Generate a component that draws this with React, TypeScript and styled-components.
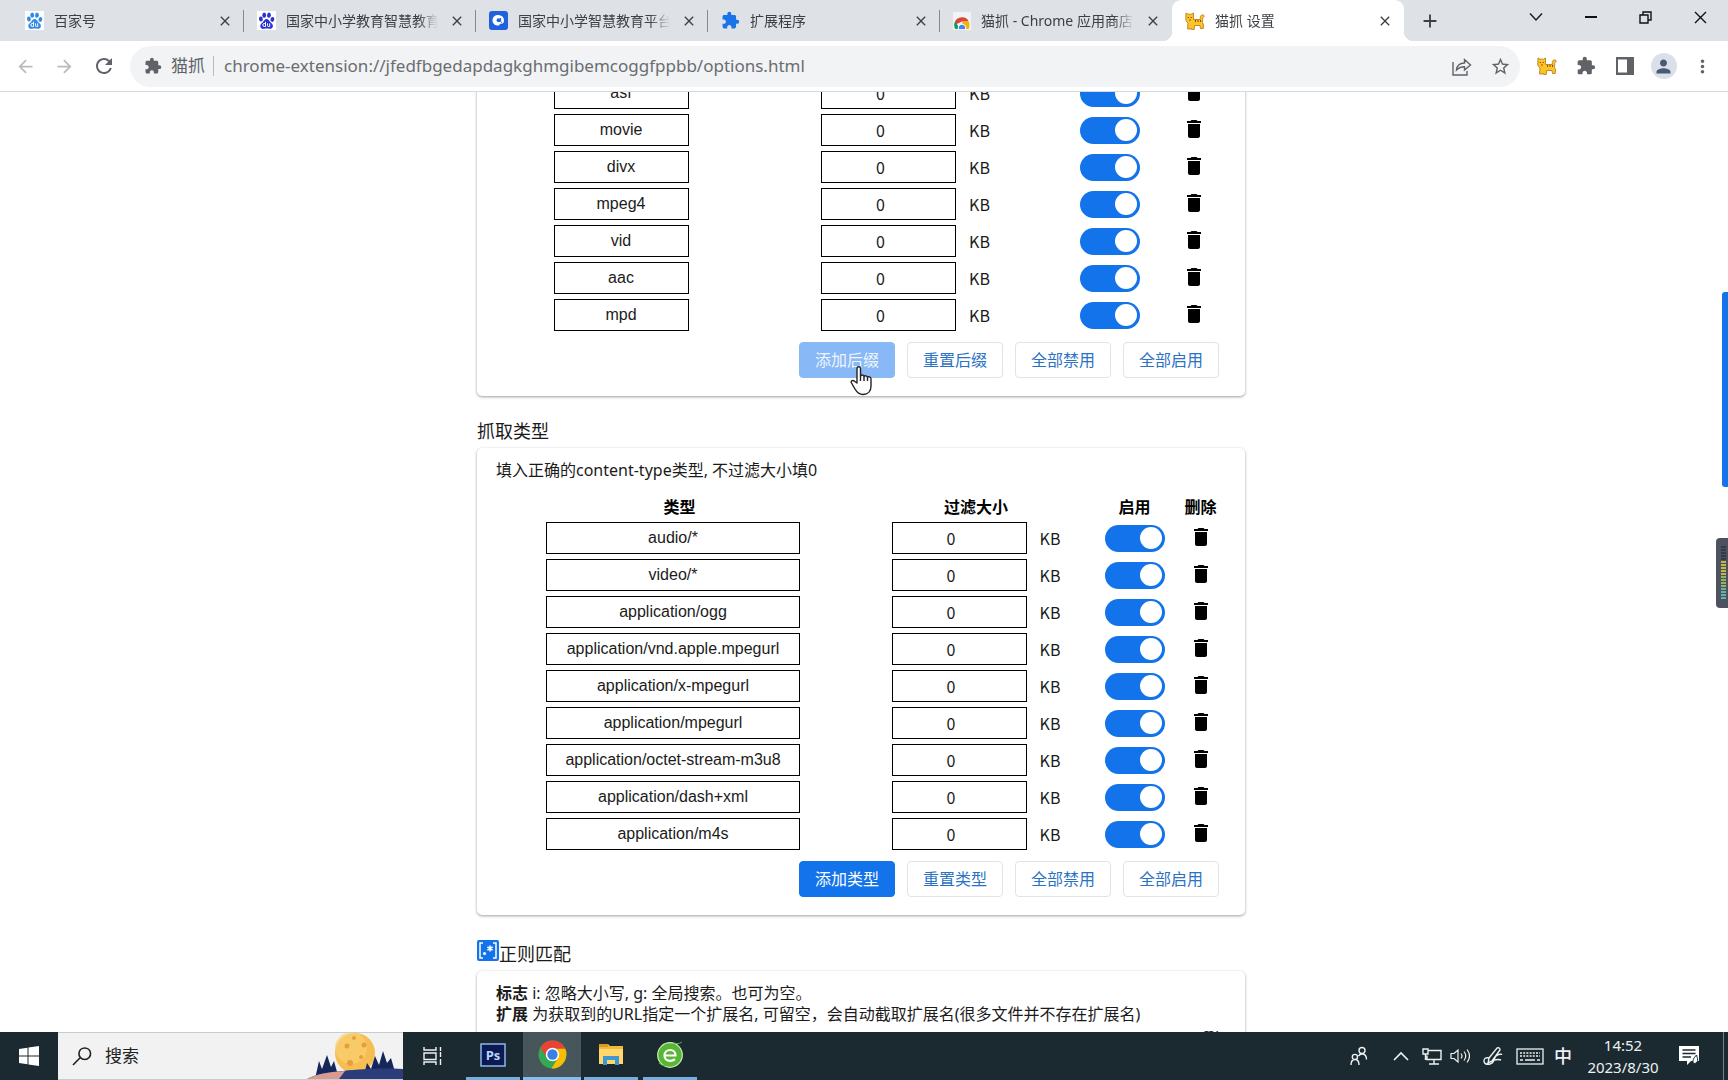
import React from 'react';
import styled, { createGlobalStyle, css } from 'styled-components';
import {
  MdArrowBack, MdArrowForward, MdRefresh, MdExtension, MdClose, MdAdd,
  MdStarBorder, MdMoreVert, MdPerson, MdDelete,
} from 'react-icons/md';

const ui = `"Noto Sans", "Noto Sans CJK SC", sans-serif`;
const narrow = `"Noto Sans CJK SC", sans-serif`;
const arial = `"Liberation Sans", "Noto Sans CJK SC", sans-serif`;
const blue = '#1273eb';

const Global = createGlobalStyle`
  *, *::before, *::after { box-sizing: border-box; }
  body { margin: 0; background: #fff; overflow: hidden; }
  button, input { font: inherit; color: inherit; margin: 0; }
  svg { display: block; flex: none; }
`;

const Screen = styled.div`
  display: grid;
  grid-template-rows: 41px 51px minmax(0, 1fr) 48px;
  height: 100vh;
  font: 16px/22px ${ui};
  color: #1b1b1b;
`;

const PlainButton = styled.button`
  display: grid;
  place-items: center;
  flex: none;
  padding: 0;
  border: 0;
  background: none;
`;

/* ---------- tab strip ---------- */

const TabStrip = styled.header`
  display: flex;
  align-items: stretch;
  padding-left: 12px;
  background: #dee1e6;
`;

const Tab = styled.div<{ $active?: boolean; $line?: boolean }>`
  position: relative;
  display: flex;
  align-items: center;
  flex: 0 1 232px;
  min-width: 0;
  gap: 10px;
  padding: 0 10px 0 13px;
  color: #3c4043;
  ${p => p.$line && css`
    &::after {
      content: '';
      position: absolute;
      right: 0;
      top: 10px;
      width: 1px;
      height: 22px;
      background: #85888c;
    }
  `}
  ${p => p.$active && css`
    background: #fff;
    border-radius: 9px 9px 0 0;
    &::before, &::after {
      content: '';
      position: absolute;
      bottom: 0;
      width: 9px;
      height: 9px;
    }
    &::before { right: 100%; background: radial-gradient(circle at 0 0, transparent 9px, #fff 9px); }
    &::after { left: 100%; background: radial-gradient(circle at 100% 0, transparent 9px, #fff 9px); }
  `}
`;

const TabTitle = styled.span`
  flex: 1;
  min-width: 0;
  overflow: hidden;
  white-space: nowrap;
  font-size: 14px;
  mask-image: linear-gradient(90deg, #000 calc(100% - 20px), transparent);
`;

const TabClose = styled(PlainButton)`
  width: 18px;
  height: 24px;
  font-size: 16px;
`;

const NewTab = styled(PlainButton)`
  width: 52px;
  font-size: 22px;
  color: #3c4043;
`;

const WindowButtons = styled.div`
  display: flex;
  margin-left: auto;
`;

const WindowButton = styled(PlainButton)`
  width: 55px;
  height: 34px;
`;

/* ---------- toolbar ---------- */

const Toolbar = styled.nav`
  display: flex;
  align-items: center;
  padding: 0 6px;
  border-bottom: 1px solid #d6d8db;
  background: #fff;
  color: #5f6368;
`;

const ToolButton = styled(PlainButton)<{ $dim?: boolean }>`
  width: 39px;
  height: 36px;
  font-size: 21px;
  color: ${p => (p.$dim ? '#b9bbbe' : '#5f6368')};
`;

const Omnibox = styled.div`
  display: flex;
  align-items: center;
  flex: 1;
  min-width: 0;
  height: 41px;
  margin: 0 7px;
  padding-left: 14px;
  border-radius: 21px;
  background: #f1f3f4;
`;

const SiteChip = styled.span`
  display: flex;
  align-items: center;
  gap: 9px;
  padding-right: 8px;
  border-right: 1px solid #b9bbbe;
  font-size: 17px;
  line-height: 20px;
  white-space: nowrap;
`;

const Address = styled.input`
  flex: 1;
  min-width: 0;
  padding: 0 0 0 10px;
  border: 0;
  background: none;
  color: #6a6d71;
  font-size: 17px;
  outline: 0;
`;

const Avatar = styled.span`
  display: grid;
  place-items: center;
  width: 26px;
  height: 26px;
  border-radius: 50%;
  background: #dadfe8;
  color: #4a5a76;
`;

/* ---------- options page ---------- */

const Viewport = styled.main`
  position: relative;
  overflow: hidden;
  padding-right: 6px;
`;

const Column = styled.div`
  width: 768px;
  max-width: 100%;
  margin: -17px auto 0;
`;

const Card = styled.section<{ $continued?: boolean }>`
  padding: ${p => (p.$continued ? '0' : '12px')} 24px 18px 19px;
  border-radius: 5px;
  background: #fff;
  box-shadow: 0 1px 3px rgba(0, 0, 0, 0.38);
`;

const SectionTitle = styled.h2<{ $tall?: boolean }>`
  display: flex;
  align-items: flex-end;
  height: ${p => (p.$tall ? '56px' : '52px')};
  margin: 0;
  padding-bottom: 4px;
  font-size: 18px;
  font-weight: 400;
  line-height: 26px;
  svg { margin-bottom: 6px; }
`;

const Note = styled.p`
  margin: 0;
  line-height: 21px;
`;

const Table = styled.table`
  width: 100%;
  table-layout: fixed;
  border-collapse: collapse;
  text-align: center;
  th { height: 25px; padding: 0; line-height: 25px; font-weight: 700; white-space: nowrap; color: #000; }
  td { padding: 2px 0 3px; }
  ${Note} + & { margin-top: 14px; }
`;

const Cell = styled.div`
  display: flex;
  align-items: center;
  justify-content: center;
  height: 32px;
`;

const Field = styled.input<{ $wide?: boolean }>`
  width: ${p => (p.$wide ? '254px' : '135px')};
  height: 32px;
  margin-right: 13px;
  padding: 0 2px;
  border: 1px solid #000;
  background: #fff;
  font-family: ${arial};
  text-align: center;
  &[type='number'] {
    padding-right: 18px;
    font-family: ${narrow};
    appearance: textfield;
  }
  &::-webkit-inner-spin-button { display: none; }
`;

const Unit = styled.span`
  font-family: ${narrow};
`;

const Switch = styled.input`
  appearance: none;
  width: 60px;
  height: 27px;
  border-radius: 14px;
  background: #b9bbbe;
  &::before {
    content: '';
    display: block;
    width: 22px;
    height: 22px;
    margin: 2px 0 0 3px;
    border-radius: 50%;
    background: #fff;
  }
  &:checked { background: ${blue}; }
  &:checked::before { margin-left: 35px; }
`;

const DeleteButton = styled(PlainButton)`
  height: 28px;
  color: #000;
  padding-bottom: 3px;
`;

const Actions = styled.div`
  display: flex;
  justify-content: flex-end;
  gap: 12px;
  margin: 8px 2px 0 0;
`;

const RuleHead = styled.div`
  display: flex;
  justify-content: flex-end;
  margin: 3px 2px 0 0;
  color: #000;
`;

const Action = styled.button<{ $kind?: 'primary' | 'pressed' }>`
  position: relative;
  width: 96px;
  height: 36px;
  padding: 0;
  border: 1px solid #e1e3e6;
  border-radius: 4px;
  background: #fff;
  color: #2b72c4;
  ${p => p.$kind === 'primary' && css`background: ${blue}; border-color: ${blue}; color: #fff;`}
  ${p => p.$kind === 'pressed' && css`background: #88b8f5; border-color: #88b8f5; color: #eef5fe;`}
`;

const Pointer = styled.svg`
  position: absolute;
  left: 50px;
  top: 22px;
  z-index: 2;
`;

const ScrollThumb = styled.div`
  position: absolute;
  right: 0;
  top: 200px;
  width: 6px;
  height: 195px;
  border-radius: 3px 0 0 3px;
  background: ${blue};
`;

const Meter = styled.div`
  position: absolute;
  right: 0;
  top: 446px;
  display: flex;
  flex-direction: column;
  gap: 1px;
  width: 12px;
  height: 70px;
  padding: 8px 2px 0 5px;
  border-radius: 4px 0 0 4px;
  background: #4c5260;
`;

const Bar = styled.i<{ $tone: string }>`
  height: 2px;
  background: ${p => p.$tone};
`;

/* ---------- taskbar ---------- */

const Taskbar = styled.footer`
  display: flex;
  align-items: stretch;
  background: #1a2a30;
  color: #eef1f2;
`;

const Start = styled(PlainButton)`
  width: 58px;
`;

const SearchBox = styled.label`
  display: flex;
  align-items: center;
  flex: 0 1 345px;
  min-width: 0;
  gap: 13px;
  padding-left: 14px;
  border: solid #c9cccd;
  border-width: 1px 0;
  background: #f2f2f2;
  color: #222;
`;

const SearchInput = styled.input`
  flex: 1;
  min-width: 0;
  padding: 0;
  border: 0;
  background: none;
  font-size: 17px;
  &::placeholder { color: #222; opacity: 1; }
`;

const TaskApps = styled.div`
  display: flex;
  gap: 1px;
`;

const TaskApp = styled(PlainButton)<{ $open?: boolean; $active?: boolean; $first?: boolean }>`
  width: ${p => (p.$first ? '60px' : '58px')};
  background: ${p => (p.$active ? '#47565a' : 'none')};
  ${p => p.$open && css`
    border-bottom: 3px solid transparent;
    border-image: linear-gradient(90deg, transparent 5px, #76aede 5px, #76aede calc(100% - 5px), transparent calc(100% - 5px)) 3;
    border-top: 0;
  `}
  ${p => p.$active && css`border-image: linear-gradient(#86bdf0, #86bdf0) 3;`}
`;

const Tray = styled.div`
  display: flex;
  align-items: center;
  margin-left: auto;
`;

const TrayButton = styled(PlainButton)<{ $w: number }>`
  width: ${p => p.$w}px;
  height: 48px;
  font-size: 18px;
  font-weight: 500;
`;

const Clock = styled.time`
  width: 92px;
  text-align: center;
  font-size: 15px;
  line-height: 22px;
`;

const ShowDesktop = styled(PlainButton)`
  width: 5px;
  height: 48px;
  margin-left: 14px;
  border-left: 1px solid #75818a;
`;

/* ---------- drawings ---------- */

const Paw = ({ color }: { color: string }) => (
  <svg width="19" height="19" viewBox="0 0 19 19">
    <rect width="19" height="19" fill="#fff" />
    <g fill={color}>
      <ellipse cx="3.9" cy="8" rx="1.9" ry="2.5" transform="rotate(-12 3.9 8)" />
      <ellipse cx="7.2" cy="4.2" rx="1.9" ry="2.6" />
      <ellipse cx="12" cy="4.2" rx="1.9" ry="2.6" transform="rotate(10 12 4.2)" />
      <ellipse cx="15.4" cy="8.4" rx="1.9" ry="2.5" transform="rotate(12 15.4 8.4)" />
      <path d="M9.6 8c1.9 0 2.4 1.700 3.600 3s3 2.200 2.700 4.300c-.3 2.400-2.300 2.700-3.600 2.500-1.800-.3-3.600-.3-5.300 0-1.600.3-3.400-.1-3.700-2.500-.2-2.100 1.500-3 2.700-4.300S7.700 8 9.600 8z" />
    </g>
    <path d="M8.500 10.800v4.700H7.300a1.500 1.500 0 0 1 0-3h1.200M10.500 12.400v2.100q0 1 1 1h1.200v-3.100" fill="none" stroke="#fff" strokeWidth="1" />
  </svg>
);

const CloudLogo = () => (
  <svg width="19" height="19" viewBox="0 0 19 19">
    <rect width="19" height="19" rx="3" fill="#1f63dc" />
    <path d="M9.500 4a5.500 5.500 0 0 1 5.500 5.500c0 2.400-1.200 3.200-2.600 3.200h-1.200l-1.200 1.800H8A5.300 5.300 0 0 1 9.500 4z" fill="#fff" />
    <circle cx="9.600" cy="9.200" r="2" fill="#1f63dc" />
    <path d="M11.600 7v3.500q.3 1 1.400.8" fill="none" stroke="#1f63dc" strokeWidth="1" />
  </svg>
);

const StoreLogo = () => (
  <svg width="18" height="18" viewBox="0 0 18 18">
    <path fill="#f1f3f4" d="M0 0h18v18H0z" />
    <path d="M1.500 13a7.500 7.500 0 0 1 14.200-3.500H9z" fill="#db4437" />
    <path d="M2.200 9.500L7 17H2.300a7.500 7.500 0 0 1-.1-7.500z" fill="#0f9d58" />
    <path d="M9 9.500h6.700c1.100 2.500 1 5 0 7.500H11z" fill="#f4b400" />
    <path d="M4.800 17a4.300 4.300 0 1 1 8.400 0z" fill="#fff" />
    <path d="M6 17a3.200 3.200 0 1 1 6 0z" fill="#4285f4" />
  </svg>
);

const Cat = () => (
  <svg width="20" height="18" viewBox="0 0 20 18">
    <path d="M1 1l2 1.200h3.500L8.500 1v6.500h6.800V5.300c0-1.600 1.200-2.600 2.800-2.300 1.300.3 1.500 1.600.5 2-.8.300-1 .7-.9 1.500.1 1.600-.2 3-.2 4l1 2.500-.3 3.500h-2.700l-.5-3H9.500l-.3 4H6.500l-.7-1.500-.3 1H2.600l.4-6C1.500 10 .8 8.500.8 7z" fill="#fcc424" stroke="#c08a28" strokeWidth="1" strokeLinejoin="round" />
    <path d="M2.800 5.500h1.200M5.600 5.500h1.200M4 8h1.800M10.500 8v2M13 8v2M15.500 8v2" stroke="#7c4d17" strokeWidth="1" fill="none" />
  </svg>
);

const ChromeLogo = () => (
  <svg width="29" height="29" viewBox="0 0 28 28">
    <circle cx="14" cy="14" r="13.500" fill="#34a853" />
    <path d="M14 14h13.300A13.500 13.500 0 0 1 13 27.500l6.500-10.500z" fill="#fbbc04" />
    <path d="M2.300 7.200a13.500 13.500 0 0 1 24.100 1.300H14v5.500L8.300 17z" fill="#ea4335" />
    <path d="M14 8.500h12.400c1.200 2.700 1.200 5 .6 8L19 17z" fill="#fbbc04" />
    <circle cx="14" cy="14" r="6.500" fill="#fff" />
    <circle cx="14" cy="14" r="5" fill="#3a7ee8" />
  </svg>
);

const Moon = () => (
  <svg width="96" height="46" viewBox="0 0 96 46">
    <circle cx="48" cy="20" r="20" fill="#f6bd52" />
    <circle cx="44" cy="15" r="16" fill="#fbd175" opacity=".65" />
    <g fill="#e5a03c"><circle cx="40" cy="13" r="2.500" /><circle cx="57" cy="12" r="2.500" /><circle cx="43" cy="30" r="3" /><circle cx="54" cy="24" r="2" /><circle cx="47" cy="5" r="2" /></g>
    <path d="M8 46l4-18 3 8 5-14 4 12 3-6 5 18zM56 46l4-16 4 6 4-13 4 9 4-14 4 12 4-5 6 21z" fill="#15265a" />
    <path d="M0 46c10-5 20-7 36-8 20-2 35-3 60-2v10z" fill="#2b3c78" />
    <path d="M0 46c10-5 20-7 38-8l-6 8z" fill="#d99a92" />
  </svg>
);

const SvgIcon = ({ w = 20, h = 20, d, sw = 1.400, color = 'currentColor', fill = 'none' }:
  { w?: number; h?: number; d: string; sw?: number; color?: string; fill?: string }) => (
  <svg width={w} height={h} viewBox={`0 0 ${w} ${h}`} fill={fill} stroke={color} strokeWidth={sw}>
    <path d={d} />
  </svg>
);

const Hand = () => (
  <Pointer width="23" height="31" viewBox="0 0 23 31" fill="#fff" stroke="#222" strokeWidth="1.400" strokeLinejoin="round">
    <path d="M7 18V3.500c0-2.300 3.500-2.300 3.500 0V11c.5-1.600 3.400-1.400 3.500.6.600-1.400 3.300-1 3.400.9.700-1.200 3.600-.8 3.600 1.500v7c0 5-3 8.500-8 8.500-4 0-6-2-8-5.500l-3.500-6c-1-2 1.500-3.500 3-1.800z" />
    <path d="M10.500 11v5M14 12v4M17.500 13v3" />
  </Pointer>
);

/* ---------- data ---------- */

const tabs = [
  { title: '百家号', icon: <Paw color="#2f8be6" />, line: true },
  { title: '国家中小学教育智慧教育平台', icon: <Paw color="#2a32d0" />, line: true },
  { title: '国家中小学智慧教育平台', icon: <CloudLogo />, line: true },
  { title: '扩展程序', icon: <MdExtension size={19} color="#1a73e8" />, line: true },
  { title: '猫抓 - Chrome 应用商店', icon: <StoreLogo /> },
  { title: '猫抓 设置', icon: <Cat />, active: true },
];

const suffixes = ['asf', 'movie', 'divx', 'mpeg4', 'vid', 'aac', 'mpd'];
const types = [
  'audio/*', 'video/*', 'application/ogg', 'application/vnd.apple.mpegurl', 'application/x-mpegurl',
  'application/mpegurl', 'application/octet-stream-m3u8', 'application/dash+xml', 'application/m4s',
];
const meterTones = [
  ...Array(5).fill('#333a46'), ...Array(5).fill('#c7b73f'), ...Array(4).fill('#93b65c'), ...Array(4).fill('#62b5a3'),
];

const FilterRows = ({ items, wide }: { items: string[]; wide?: boolean }) => (
  <tbody>
    {items.map(item => (
      <tr key={item}>
        <td><Cell><Field $wide={wide} type="text" aria-label="类型" defaultValue={item} /></Cell></td>
        <td>
          <Cell>
            <Field type="number" aria-label={`${item} 过滤大小`} defaultValue={0} />
            <Unit>KB</Unit>
          </Cell>
        </td>
        <td><Cell><Switch type="checkbox" aria-label={`启用 ${item}`} defaultChecked /></Cell></td>
        <td>
          <Cell>
            <DeleteButton type="button" aria-label={`删除 ${item}`}><MdDelete size={24} /></DeleteButton>
          </Cell>
        </td>
      </tr>
    ))}
  </tbody>
);

const Columns = ({ widths }: { widths: number[] }) => (
  <colgroup>{widths.map((w, i) => <col key={i} width={w} />)}</colgroup>
);

export default function App() {
  return (
    <Screen>
      <Global />
      <TabStrip>
        {tabs.map(t => (
          <Tab key={t.title} $active={t.active} $line={t.line}>
            {t.icon}
            <TabTitle>{t.title}</TabTitle>
            <TabClose aria-label="关闭标签页"><MdClose /></TabClose>
          </Tab>
        ))}
        <NewTab aria-label="新标签页"><MdAdd /></NewTab>
        <WindowButtons>
          <WindowButton aria-label="搜索标签页"><SvgIcon w={14} h={10} d="M1 1.500l6 6.500 6-6.500" /></WindowButton>
          <WindowButton aria-label="最小化"><SvgIcon w={12} h={12} d="M0 6h12" color="#111" sw={2} /></WindowButton>
          <WindowButton aria-label="还原"><SvgIcon w={13} h={13} d="M1 4h8v8H1zM4 4V1h8v8H9" color="#111" /></WindowButton>
          <WindowButton aria-label="关闭"><SvgIcon w={13} h={13} d="M1 1l11 11M12 1L1 12" color="#111" /></WindowButton>
        </WindowButtons>
      </TabStrip>

      <Toolbar>
        <ToolButton $dim aria-label="后退"><MdArrowBack /></ToolButton>
        <ToolButton $dim aria-label="前进"><MdArrowForward /></ToolButton>
        <ToolButton aria-label="重新加载"><MdRefresh size={24} /></ToolButton>
        <Omnibox>
          <SiteChip><MdExtension size={18} />猫抓</SiteChip>
          <Address aria-label="地址" defaultValue="chrome-extension://jfedfbgedapdagkghmgibemcoggfppbb/options.html" />
          <ToolButton aria-label="分享">
            <SvgIcon w={20} h={19} d="M1 5v13h14v-4M4.500 13c.5-4.500 3.500-7 8-7V2.500L18.500 8l-6 5V9.800c-3.500 0-5.800 1-8 3.200z" />
          </ToolButton>
          <ToolButton aria-label="收藏"><MdStarBorder /></ToolButton>
        </Omnibox>
        <ToolButton aria-label="猫抓"><Cat /></ToolButton>
        <ToolButton aria-label="扩展程序"><MdExtension size={20} /></ToolButton>
        <ToolButton aria-label="侧边栏">
          <svg width="18" height="18" viewBox="0 0 18 18"><path fill="#5f6368" fillRule="evenodd" d="M0 0h18v18H0zM2 2.500h9v13H2z" /></svg>
        </ToolButton>
        <ToolButton aria-label="用户"><Avatar><MdPerson size={21} /></Avatar></ToolButton>
        <ToolButton aria-label="菜单"><MdMoreVert /></ToolButton>
      </Toolbar>

      <Viewport>
        <Column>
          <Card $continued>
            <Table>
              <Columns widths={[263, 293, 115, 54]} />
              <FilterRows items={suffixes} />
            </Table>
            <Actions>
              <Action $kind="pressed">添加后缀<Hand /></Action>
              <Action>重置后缀</Action>
              <Action>全部禁用</Action>
              <Action>全部启用</Action>
            </Actions>
          </Card>

          <SectionTitle>抓取类型</SectionTitle>
          <Card>
            <Note>填入正确的content-type类型, 不过滤大小填0</Note>
            <Table>
              <Columns widths={[367, 226, 91, 41]} />
              <thead>
                <tr><th>类型</th><th>过滤大小</th><th>启用</th><th>删除</th></tr>
              </thead>
              <FilterRows items={types} wide />
            </Table>
            <Actions>
              <Action $kind="primary">添加类型</Action>
              <Action>重置类型</Action>
              <Action>全部禁用</Action>
              <Action>全部启用</Action>
            </Actions>
          </Card>

          <SectionTitle $tall>
            <svg width="22" height="21" viewBox="0 0 22 21">
              <rect width="22" height="21" rx="2" fill={blue} />
              <path d="M6 3H3v15h3M16 3h3v15h-3M13 5.500v6M10.400 7l5.200 3M15.600 7l-5.200 3" stroke="#fff" strokeWidth="1.500" fill="none" />
              <circle cx="7.500" cy="13.500" r="1.600" fill="#fff" />
            </svg>
            正则匹配
          </SectionTitle>
          <Card>
            <Note><b>标志</b> i: 忽略大小写, g: 全局搜索。也可为空。</Note>
            <Note><b>扩展</b> 为获取到的URL指定一个扩展名, 可留空，会自动截取扩展名(很多文件并不存在扩展名)</Note>
            <RuleHead><b>删<br />除</b></RuleHead>
          </Card>
        </Column>
        <ScrollThumb />
        <Meter>{meterTones.map((tone, i) => <Bar key={i} $tone={tone} />)}</Meter>
      </Viewport>

      <Taskbar>
        <Start aria-label="开始">
          <svg width="20" height="20" viewBox="0 0 20 20" fill="#fff"><path d="M0 3l8.500-1.200v7.700H0zM9.500 1.600L20 0v9.500H9.500zM0 10.500h8.500v7.700L0 17zM9.500 10.500H20V20l-10.500-1.600z" /></svg>
        </Start>
        <SearchBox>
          <SvgIcon w={20} h={20} d="M18.500 7A5.800 5.800 0 1 1 7 7a5.800 5.800 0 0 1 11.500 0zM8.600 11.200L1 19" sw={1.600} />
          <SearchInput type="search" placeholder="搜索" aria-label="搜索" />
          <Moon />
        </SearchBox>
        <TaskApps>
          <TaskApp $first aria-label="任务视图">
            <SvgIcon w={20} h={20} d="M1 1v3h12V1M1 7h12v6.500H1zM1 19v-3h12v3M17.500 1v4M17.500 13v6M17.500 6v5" />
          </TaskApp>
          <TaskApp $open aria-label="Photoshop">
            <svg width="26" height="24" viewBox="0 0 26 24">
              <rect x="1" y="1" width="24" height="22" fill="#0b1a52" stroke="#8fb6ea" strokeWidth="1.500" />
              <text x="13" y="17" textAnchor="middle" fontFamily="Open Sans" fontWeight="700" fontSize="13" fill="#b6d6fa">Ps</text>
            </svg>
          </TaskApp>
          <TaskApp $open $active aria-label="Chrome"><ChromeLogo /></TaskApp>
          <TaskApp $open aria-label="文件资源管理器">
            <svg width="26" height="23" viewBox="0 0 26 23">
              <path d="M1 1h9l2 2h13v18H1z" fill="#f0b93a" /><path d="M1 6h24v15H1z" fill="#ffd869" />
              <path d="M1 1h9v3H1z" fill="#d99a22" /><path d="M5 22v-9h16v9h-4v-5H9v5z" fill="#3f96d2" />
            </svg>
          </TaskApp>
          <TaskApp $open aria-label="浏览器">
            <svg width="28" height="28" viewBox="0 0 28 28">
              <circle cx="14" cy="14" r="12.300" fill="#58b536" stroke="#c9efb3" strokeWidth="1.200" />
              <path d="M8.500 14.500h11c0-3.500-2.200-5.500-5.300-5.500s-5.700 2.200-5.700 5.400c0 3.300 2.300 5.400 5.700 5.400 2 0 3.600-.6 4.800-1.700" fill="none" stroke="#fff" strokeWidth="2.200" />
              <path d="M3 22C8 27 12 23 16 25M18 2c3 1 5 1 8-1" stroke="#58b536" fill="none" />
            </svg>
          </TaskApp>
        </TaskApps>
        <Tray>
          <TrayButton $w={50} aria-label="人脉">
            <SvgIcon w={18} h={20} d="M1 19c0-4 1.500-5.500 4-5.500S9 15 9 19M7.500 11A2.600 2.600 0 1 1 2.300 11a2.600 2.600 0 0 1 5.200 0zM15 4.500a3 3 0 1 1-6 0 3 3 0 0 1 6 0zM8.500 10c1-1.500 2-2 3.500-2 3 0 4.500 2 4.500 5.500" />
          </TrayButton>
          <TrayButton $w={34} aria-label="显示隐藏的图标"><SvgIcon w={16} h={10} d="M1 9l7-7 7 7" sw={1.600} /></TrayButton>
          <TrayButton $w={27} aria-label="网络">
            <SvgIcon w={20} h={17} d="M6 2.500h13v9H5v-4M12 11.500V16M7 16h10M1 1h5v5H1zM3.500 6v6" />
          </TrayButton>
          <TrayButton $w={30} aria-label="音量">
            <SvgIcon w={20} h={18} d="M1 6.500h3L8 3v12l-4-3.500H1zM11 6.500q2 2.500 0 5M14 4.500q3.500 4.500 0 9M17 2.500q5 6.500 0 13" sw={1.200} />
          </TrayButton>
          <TrayButton $w={36} aria-label="手写笔">
            <SvgIcon w={20} h={20} d="M6 12L14 2q3-1 3 2L9 15l-4 2zM6 12q-5-1-5 3t6 3c5-1 3-5 6-8s5-1 6-2M11 14q5-1 7 0" />
          </TrayButton>
          <TrayButton $w={38} aria-label="触摸键盘">
            <svg width="28" height="17" viewBox="0 0 28 17" fill="none" stroke="currentColor">
              <rect x="1" y="1" width="26" height="15" strokeWidth="1.300" />
              <path d="M4 5h20M4 8h20" strokeDasharray="2 1.200" strokeWidth="1.300" /><path d="M4 12h3M9 12h10M21 12h3" strokeWidth="1.300" />
            </svg>
          </TrayButton>
          <TrayButton $w={28} aria-label="输入法">中</TrayButton>
          <Clock>14:52<br />2023/8/30</Clock>
          <TrayButton $w={40} aria-label="通知">
            <svg width="20" height="20" viewBox="0 0 20 20">
              <path d="M0 0h20v15h-8l-4 4v-4H0z" fill="#fff" />
              <path d="M3.500 4h13M3.500 7.500h13M3.500 11H12" stroke="#1a2a30" strokeWidth="1.300" />
              <path d="M17.500 9q-5 5-3 8.500 5 0 4-5z" fill="#fff" stroke="#1a2a30" />
            </svg>
          </TrayButton>
          <ShowDesktop aria-label="显示桌面" />
        </Tray>
      </Taskbar>
    </Screen>
  );
}
